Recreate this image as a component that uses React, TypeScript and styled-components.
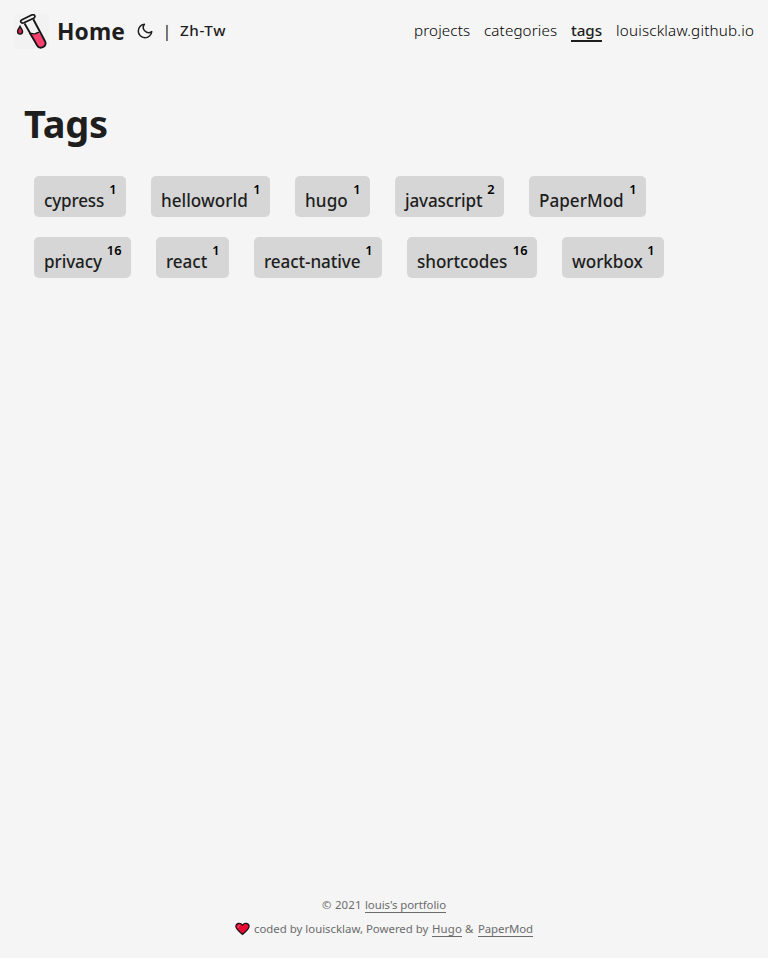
import React from 'react';
import styled, { createGlobalStyle } from 'styled-components';

const GlobalStyle = createGlobalStyle`
  * { box-sizing: border-box; }
  body {
    margin: 0;
    background: #f5f5f5;
    color: #1e1e1e;
    font-family: "Noto Sans", "Open Sans", sans-serif;
  }
  a { color: inherit; text-decoration: none; }
`;

const Page = styled.div`
  display: flex;
  flex-direction: column;
  height: 958px;
  overflow: hidden;
`;

const Header = styled.header`
  display: flex;
  justify-content: space-between;
  height: 60px;
  line-height: 60px;
  padding: 0 14px;
  white-space: nowrap;
`;

const Brand = styled.div`
  display: flex;
  align-items: center;
`;

const Home = styled.a`
  display: flex;
  align-items: center;
  height: 60px;
  font-size: 22.8px;
  font-weight: 700;
  letter-spacing: 0.12px;
`;

const Logo = styled.svg`
  width: 35px;
  height: 35px;
  margin: 2px 8px 0 0;
`;

const HomeLabel = styled.span`
  width: 79px;
  padding-top: 3px;
`;

const Moon = styled.svg`
  width: 18px;
  height: 18px;
  margin-top: 2px;
  fill: none;
  stroke: #1e1e1e;
  stroke-width: 2;
  stroke-linecap: round;
  stroke-linejoin: round;
`;

const Divider = styled.span`
  width: 26px;
  text-align: center;
  font-size: 16px;
  margin-top: 1px;
`;

const Language = styled.a`
  font-size: 15.2px;
  font-weight: 500;
  letter-spacing: 0.6px;
`;

const Menu = styled.nav`
  display: flex;
  gap: 14px;
  font-size: 15.2px;
`;

const MenuLink = styled.a<{ $width: number; $spacing: number; $active?: boolean }>`
  width: ${p => p.$width}px;
  height: 20px;
  margin-top: 22px;
  line-height: 17px;
  letter-spacing: ${p => p.$spacing}px;
  color: ${p => (p.$active ? '#1e1e1e' : '#000')};
  font-weight: ${p => (p.$active ? 500 : 300)};
  border-bottom: ${p => (p.$active ? '2px solid #1e1e1e' : '0')};
`;

const Main = styled.main`
  flex: 1;
  padding: 35px 24px 0;
`;

const Title = styled.h1`
  margin: 0;
  font-size: 38px;
  line-height: 56px;
  font-weight: 700;
  letter-spacing: -0.19px;
`;

const TagList = styled.ul`
  display: flex;
  flex-wrap: wrap;
  gap: 20px 25px;
  list-style: none;
  margin: 25px 0 0;
  padding: 0 10px;
`;

const Tag = styled.li<{ $width: number }>`
  display: flex;
  justify-content: space-between;
  width: ${p => p.$width}px;
  height: 41px;
  padding: 0 9.5px 0 10px;
  border-radius: 5px;
  background: #d6d6d6;
  white-space: nowrap;
`;

const TagName = styled.a<{ $spacing: number }>`
  padding-top: 13px;
  font-size: 17.1px;
  line-height: 24px;
  font-weight: 500;
  letter-spacing: ${p => p.$spacing}px;
`;

const Count = styled.sup`
  padding-top: 4px;
  font-size: 12.8px;
  line-height: 18px;
  font-weight: 600;
  color: #000;
`;

const Footer = styled.footer`
  height: 66px;
  font-size: 11.4px;
  line-height: 24px;
  color: #6c6c6c;
`;

const FooterLine = styled.div`
  display: flex;
  justify-content: center;
  align-items: flex-start;
  height: 24px;
  white-space: pre;
`;

const FooterText = styled.span<{ $width?: number; $spacing?: number }>`
  width: ${p => (p.$width ? `${p.$width}px` : 'auto')};
  padding-top: 1px;
  letter-spacing: ${p => p.$spacing ?? 0}px;
`;

const FooterLink = styled.a<{ $width: number; $spacing: number }>`
  width: ${p => p.$width}px;
  height: 21px;
  padding-top: 1px;
  letter-spacing: ${p => p.$spacing}px;
  border-bottom: 1px solid #6c6c6c;
`;

const Heart = styled.svg`
  width: 15px;
  height: 14px;
  margin: 6px 4px 0 0;
`;

const tags = [
  { name: 'cypress', count: 1, width: 92, spacing: -0.19 },
  { name: 'helloworld', count: 1, width: 119, spacing: 0.02 },
  { name: 'hugo', count: 1, width: 75, spacing: 0.1 },
  { name: 'javascript', count: 2, width: 109, spacing: -0.15 },
  { name: 'PaperMod', count: 1, width: 117, spacing: 0.02 },
  { name: 'privacy', count: 16, width: 97, spacing: -0.09 },
  { name: 'react', count: 1, width: 73, spacing: -0.04 },
  { name: 'react-native', count: 1, width: 128, spacing: -0.08 },
  { name: 'shortcodes', count: 16, width: 130, spacing: -0.05 },
  { name: 'workbox', count: 1, width: 102, spacing: -0.04 },
];

const menu = [
  { label: 'projects', width: 56, spacing: 0.13 },
  { label: 'categories', width: 73, spacing: 0.12 },
  { label: 'tags', width: 31, spacing: -0.08, active: true },
  { label: 'louiscklaw.github.io', width: 138, spacing: 0.2 },
];

function TubeLogo() {
  return (
    <Logo viewBox="0 0 35 35">
      <rect width="35" height="35" rx="3" fill="#f2f2f2" />
      <path d="M15.4 20.2c2.6-1.4 3.6.3 5.8-.4 1.4-.5 2-1.5 3.9-1.3l5.9 9.6c2.3 4.2-4.8 8.2-7.3 4.3z" fill="#f83f6d" />
      <path d="M10.6 9.5 23.2 31.6c2.8 4.8 10.5.4 7.8-4.4L19.3 5.3" fill="none" stroke="#151515" strokeWidth="1.9" />
      <path d="M15.6 19.8c2.5-1.2 3.5.6 5.7-.1 1.4-.5 2-1.5 3.8-1.3" fill="none" stroke="#151515" strokeWidth="1.4" />
      <path d="M8 5.7 17.6 1c2.9-1.3 4.6 1.8 2 3.2L9.9 8.8C7 9.9 5.4 7.1 8 5.7z" fill="#f2f2f2" stroke="#151515" strokeWidth="1.7" />
      <path d="M6 12.4c-1 2-2.5 3.2-2.4 5.1.1 3.5 4.9 3.5 5 0C8.6 15.6 7 14.4 6 12.4z" fill="#c8284e" stroke="#151515" strokeWidth="1.4" />
    </Logo>
  );
}

export default function App() {
  return (
    <>
      <GlobalStyle />
      <Page>
        <Header>
          <Brand>
            <Home>
              <TubeLogo />
              <HomeLabel>Home</HomeLabel>
            </Home>
            <Moon viewBox="0 0 24 24">
              <path d="M21 12.79A9 9 0 1 1 11.21 3 7 7 0 0 0 21 12.79z" />
            </Moon>
            <Divider>|</Divider>
            <Language>Zh-Tw</Language>
          </Brand>
          <Menu>
            {menu.map(item => (
              <MenuLink key={item.label} $width={item.width} $spacing={item.spacing} $active={item.active}>
                {item.label}
              </MenuLink>
            ))}
          </Menu>
        </Header>
        <Main>
          <Title>Tags</Title>
          <TagList>
            {tags.map(tag => (
              <Tag key={tag.name} $width={tag.width}>
                <TagName $spacing={tag.spacing}>{tag.name}</TagName>
                <Count>{tag.count}</Count>
              </Tag>
            ))}
          </TagList>
        </Main>
        <Footer>
          <FooterLine>
            <FooterText $width={43} $spacing={0.22}>© 2021 </FooterText>
            <FooterLink $width={81} $spacing={-0.07}>louis's portfolio</FooterLink>
          </FooterLine>
          <FooterLine>
            <Heart viewBox="0 0 15 14">
              <path d="M7.5 12.4C5.5 10.2.9 7.6.9 4.3.9 1 5.5 0 7.5 3.2 9.5 0 14.1 1 14.1 4.3c0 3.3-4.6 5.9-6.6 8.1z" fill="#e50b32" stroke="#191014" strokeWidth="1.2" />
              <path d="M3 5.3c0-1 .5-1.5 1.3-1.8" fill="none" stroke="#f37a8c" strokeLinecap="round" />
            </Heart>
            <FooterText $width={178} $spacing={0}>coded by louiscklaw, Powered by </FooterText>
            <FooterLink $width={30} $spacing={0.16}>Hugo</FooterLink>
            <FooterText $width={16}> &amp; </FooterText>
            <FooterLink $width={55} $spacing={-0.08}>PaperMod</FooterLink>
          </FooterLine>
        </Footer>
      </Page>
    </>
  );
}
